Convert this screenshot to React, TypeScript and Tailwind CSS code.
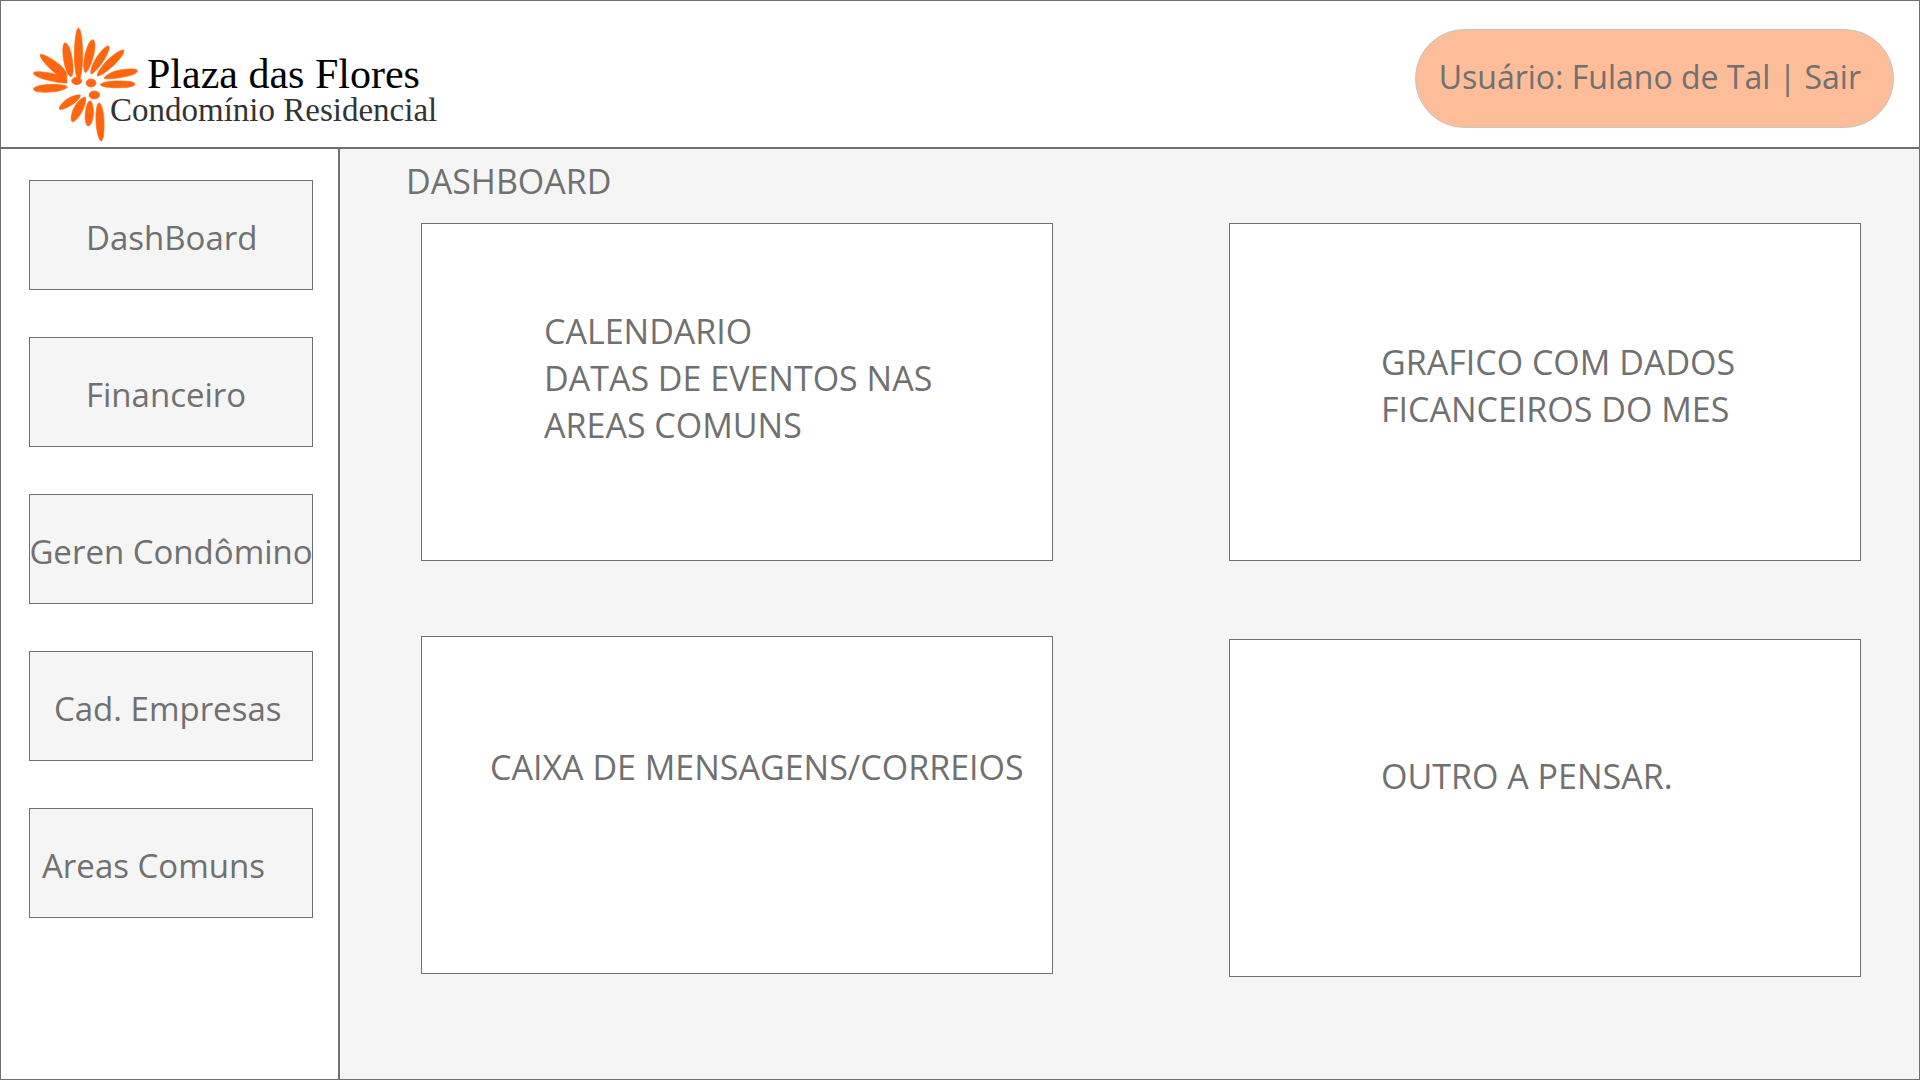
const PETALS = [
  'M235 84C243 86 247 120 248 160C248 200 244 222 241 234L231 234C227 222 223 195 223 160C224 120 229 86 235 84Z',
  'M194 129C203 126 213 150 217 180C221 205 220 228 213 230C203 226 195 205 191 180C187 155 188 131 194 129Z',
  'M120 164C128 159 160 178 180 195C195 209 203 222 200 230L201 249C190 250 165 246 145 241C120 235 100 226 100 219C103 212 130 216 150 219C160 221 168 224 172 224C150 208 122 180 120 164Z',
  'M100 268C100 260 125 254 155 253C180 253 200 256 202 261C198 268 175 275 150 276C125 278 102 276 100 268Z',
  'M279 119C287 122 286 145 281 165C275 190 264 215 256 218C249 212 250 185 256 160C262 138 270 119 279 119Z',
  'M326 138C331 145 322 165 310 183C297 203 281 221 273 222C270 212 278 190 290 172C303 152 318 136 326 138Z',
  'M371 150C375 157 362 175 345 192C325 212 300 229 292 228C290 220 305 198 322 181C342 162 363 148 371 150Z',
  'M412 211C414 218 400 225 380 229C355 235 318 239 312 235C316 226 335 215 360 210C385 206 409 205 412 211Z',
  'M301 254C304 247 330 243 355 243C380 243 405 245 405 252C404 260 385 263 360 263C330 264 304 261 301 254Z',
  'M241 286C240 297 225 310 208 319C195 326 180 332 178 327C177 319 190 304 205 295C220 287 238 282 241 286Z',
  'M256 291C260 303 252 325 243 340C234 355 221 368 216 365C211 360 214 340 222 323C232 304 248 291 256 291Z',
  'M270 302C278 306 281 325 280 345C278 365 270 379 264 378C257 376 254 360 256 340C258 320 263 304 270 302Z',
  'M297 308C306 312 311 335 312 365C313 395 310 422 304 423C296 422 290 395 288 365C287 335 290 311 297 308Z',
];

const NAV = [
  { label: 'DashBoard', pad: 'pl-14' },
  { label: 'Financeiro', pad: 'pl-14' },
  { label: 'Geren Condômino', pad: 'justify-center' },
  { label: 'Cad. Empresas', pad: 'pl-6' },
  { label: 'Areas Comuns', pad: 'pl-3' },
];

function Logo() {
  return (
    <a href="#" className="flex pl-8 pt-[26px]">
      <svg
        className="h-[115px] w-[105px] shrink-0"
        viewBox="99 81 315 345"
        fill="#ff660f"
        stroke="#ff660f"
        strokeWidth="2"
        strokeLinejoin="round"
        aria-hidden="true"
      >
        {PETALS.map((d) => (
          <path key={d} d={d} />
        ))}
        <ellipse cx="230" cy="243" rx="15" ry="11" />
        <ellipse cx="273" cy="249" rx="15" ry="12" />
        <ellipse cx="283" cy="285" rx="16" ry="12" />
      </svg>
      <span className="-ml-7 flex flex-col whitespace-nowrap pt-[27px] font-['Liberation_Serif',serif]">
        <span className="pl-[37px] text-[42px] leading-10 text-black">Plaza das Flores</span>
        <span className="text-[33px] leading-8 text-[#333333]">Condomínio Residencial</span>
      </span>
    </a>
  );
}

function Card({ text, className }: { text: string; className: string }) {
  return (
    <section className={'h-[338px] whitespace-pre-line border border-[#707070] bg-white ' + className}>
      <p>{text}</p>
    </section>
  );
}

export default function App() {
  return (
    <div className="flex min-h-screen flex-col border border-[#707070] bg-white font-['Open_Sans','Noto_Sans',sans-serif] text-[34px] leading-[47px] text-[#707070]">
      <header className="flex h-[148px] items-start justify-between border-b-2 border-[#707070]">
        <Logo />
        <div className="mr-[25px] mt-7 flex h-[99px] min-w-[479px] items-start whitespace-nowrap rounded-full border border-[#c5c5c5] bg-[#fdbd99] pl-[23px] pr-8 pt-[23px] text-[32px]">
          <span>Usuário: Fulano de Tal |&nbsp;</span>
          <a href="#">Sair</a>
        </div>
      </header>
      <div className="flex grow">
        <nav className="flex w-[339px] shrink-0 flex-col gap-[47px] border-r-2 border-[#707070] pl-7 pr-[25px] pt-[31px] text-[33px]">
          {NAV.map((item) => (
            <button
              key={item.label}
              type="button"
              className={'flex h-[110px] items-start whitespace-nowrap border border-[#707070] bg-[#f5f5f5] pt-[33px] ' + item.pad}
            >
              {item.label}
            </button>
          ))}
        </nav>
        <main className="grow bg-[#f5f5f5] pr-[58px] pt-[9px]">
          <h1 className="pl-[66px]">DASHBOARD</h1>
          <div className="mt-[18px] grid grid-cols-2 gap-x-44 pl-[81px]">
            <div className="flex flex-col gap-[75px]">
              <Card text={'CALENDARIO\nDATAS DE EVENTOS NAS\nAREAS COMUNS'} className="pl-[122px] pt-[84px]" />
              <Card text="CAIXA DE MENSAGENS/CORREIOS" className="pl-[68px] pt-[107px]" />
            </div>
            <div className="flex flex-col gap-[78px]">
              <Card text={'GRAFICO COM DADOS\nFICANCEIROS DO MES'} className="pl-[151px] pt-[115px]" />
              <Card text="OUTRO A PENSAR." className="pl-[151px] pt-[113px]" />
            </div>
          </div>
        </main>
      </div>
    </div>
  );
}
